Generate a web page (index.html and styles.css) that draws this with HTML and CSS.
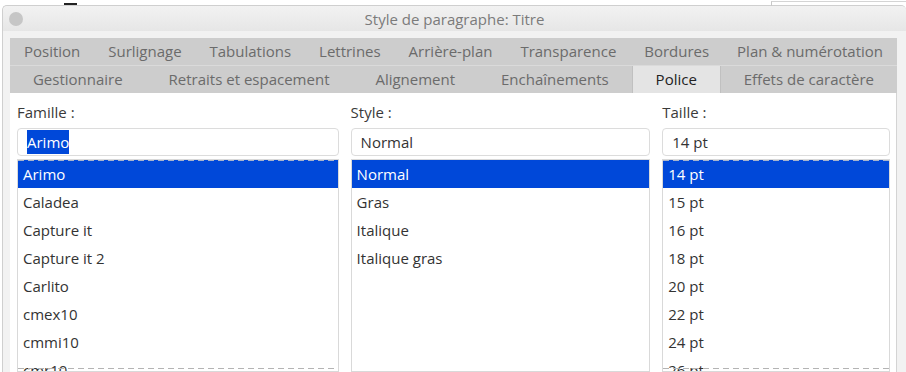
FILE: index.html
```
<!DOCTYPE html>
<html lang="fr">
<head>
  <meta charset="UTF-8">
  <title>Style de paragraphe: Titre</title>
  <link rel="stylesheet" href="styles.css">
</head>
<body>

  <div class="desktop">
    <span class="desk-mark"></span>
    <span class="desk-frame"></span>
  </div>

  <div class="window">
    <div class="titlebar">
      <span class="close"></span>
      <span class="title">Style de paragraphe: Titre</span>
      <span></span>
    </div>

    <div class="window-body">
      <div class="tabs">
        <div class="tab-row">
          <div class="tab">Position</div>
          <div class="tab">Surlignage</div>
          <div class="tab">Tabulations</div>
          <div class="tab">Lettrines</div>
          <div class="tab">Arrière-plan</div>
          <div class="tab">Transparence</div>
          <div class="tab">Bordures</div>
          <div class="tab">Plan &amp; numérotation</div>
        </div>
        <div class="tab-row">
          <div class="tab">Gestionnaire</div>
          <div class="tab">Retraits et espacement</div>
          <div class="tab">Alignement</div>
          <div class="tab">Enchaînements</div>
          <div class="tab active">Police</div>
          <div class="tab">Effets de caractère</div>
        </div>
      </div>

      <div class="panel">
        <div class="column">
          <div class="label">Famille :</div>
          <div class="field"><span class="selected-text">Arimo</span></div>
          <ul class="listbox scrolled">
            <li class="current">Arimo</li>
            <li>Caladea</li>
            <li>Capture it</li>
            <li>Capture it 2</li>
            <li>Carlito</li>
            <li>cmex10</li>
            <li>cmmi10</li>
            <li>cmr10</li>
          </ul>
        </div>

        <div class="column">
          <div class="label">Style :</div>
          <div class="field">Normal</div>
          <ul class="listbox">
            <li class="current">Normal</li>
            <li>Gras</li>
            <li>Italique</li>
            <li>Italique gras</li>
          </ul>
        </div>

        <div class="column">
          <div class="label">Taille :</div>
          <div class="field">14 pt</div>
          <ul class="listbox scrolled">
            <li class="current">14 pt</li>
            <li>15 pt</li>
            <li>16 pt</li>
            <li>18 pt</li>
            <li>20 pt</li>
            <li>22 pt</li>
            <li>24 pt</li>
            <li>26 pt</li>
          </ul>
        </div>
      </div>
    </div>
  </div>

</body>
</html>
```

FILE: styles.css
```
body {
  margin: 0;
  background: #ffffff;
  font-family: "Open Sans", "Noto Sans", sans-serif;
  font-size: 15px;
  color: #333333;
  height: 372px;
  overflow: hidden;
}
.desktop {
  height: 5px;
  position: relative;
}
.desk-mark {
  position: absolute;
  left: 64px;
  top: 3px;
  width: 13px;
  height: 2px;
  background: #222222;
}
.desk-frame {
  position: absolute;
  left: 771px;
  top: 1px;
  right: 0;
  height: 4px;
  border-left: 1px solid #c8c8c8;
  border-top: 1px solid #d4d4d4;
}
.window {
  margin-left: 2px;
  border: 1px solid #cfcfcf;
  border-right: none;
  border-radius: 5px 5px 0 0;
  background: #f2f2f2;
  height: 367px;
}
.titlebar {
  height: 25px;
  display: grid;
  grid-template-columns: 1fr auto 1fr;
  align-items: center;
  background: linear-gradient(#f2f2f2, #e6e6e6);
  border-radius: 5px 5px 0 0;
}
.close {
  width: 14px;
  height: 14px;
  margin-left: 6px;
  border-radius: 50%;
  background: #c6c6c6;
}
.title {
  color: #7b7b7b;
  font-size: 15px;
}
.window-body {
  padding: 7px 9px 0 7px;
}
.tab-row {
  display: flex;
  background: #cdcdcd;
  height: 27px;
}
.tab-row:first-child {
  border-bottom: 1px solid #dadada;
}
.tab {
  flex: 1 1 auto;
  text-align: center;
  line-height: 27px;
  color: #6b6b6b;
  white-space: nowrap;
  padding: 0 8px;
}
.tab.active {
  background: #e4e4e4;
  color: #222222;
  border-left: 1px solid #c0c0c0;
  border-right: 1px solid #c0c0c0;
}
.panel {
  background: #ffffff;
  border-right: 1px solid #d4d4d4;
  padding: 9px 6px 0 7px;
  display: grid;
  grid-template-columns: 322fr 300fr 228fr;
  gap: 12px;
  height: 272px;
}
.label {
  line-height: 20px;
  color: #3a3a3a;
  margin-bottom: 6px;
}
.field {
  height: 26px;
  border: 1px solid #dcdcdc;
  border-radius: 4px;
  line-height: 26px;
  padding-left: 9px;
  color: #333333;
}
.selected-text {
  background: #0048d9;
  color: #ffffff;
  padding: 2px 0;
}
.listbox {
  list-style: none;
  margin: 3px 0 0;
  padding: 0;
  height: 211px;
  border: 1px solid #d9d9d9;
  overflow: hidden;
  position: relative;
}
.listbox li {
  height: 28px;
  line-height: 28px;
  padding-left: 5px;
  color: #333333;
}
.listbox li.current {
  background: #0048d9;
  color: #ffffff;
}
.scrolled::before,
.scrolled::after {
  content: "";
  position: absolute;
  left: 0;
  right: 0;
  height: 1px;
  background: repeating-linear-gradient(to right, #a8b4cc 0 6px, transparent 6px 10px);
}
.scrolled::before {
  top: 0;
}
.scrolled::after {
  bottom: 2px;
  background: repeating-linear-gradient(to right, #b4b4b4 0 6px, transparent 6px 10px);
}
```
